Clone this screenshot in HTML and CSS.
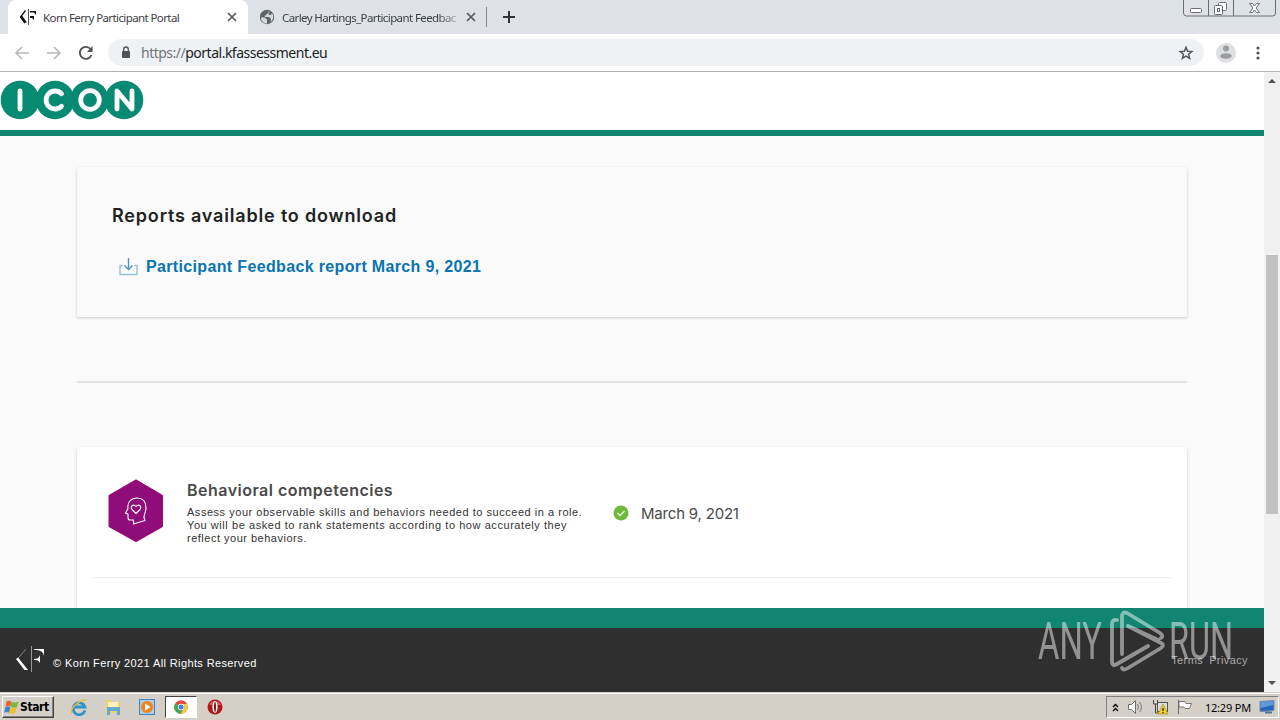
FILE: index.html
```html
<!DOCTYPE html>
<html lang="en">

<head>
	<meta charset="utf-8">
	<title>Korn Ferry Participant Portal</title>
	<link rel="stylesheet" href="styles.css">
</head>

<body>
	<div class="desktop">
		<!--Browser tabs-->
		<div class="tabs">
			<div class="tab active">
				<svg class="favicon" width="18" height="18" viewBox="0 0 18 18"><path d="M6.500 2.500L1.500 9L6 15" fill="none" stroke="#111" stroke-width="1.300"/><path d="M1 9L3 7.500L8 14.500H5z" fill="#111"/><path d="M9.500 1v16" stroke="#555"/><path d="M11 3h6v4L15 4.500h-4zM11 8h4v4l-2-2h-2z" fill="#111"/></svg>
				<span class="tab-title">Korn Ferry Participant Portal</span>
				<svg class="close" width="10" height="10" viewBox="0 0 10 10"><path d="M1 1l8 8M9 1l-8 8"/></svg>
			</div>
			<div class="tab">
				<svg class="favicon globe" width="16" height="16" viewBox="0 0 16 16"><circle cx="7" cy="8" r="7.200" fill="#5f6368"/><path d="M1 8.500h3.500l2.500 2v4C3.500 14.500 1 12 1 8.500zM7 2l2 .3-.5 2-2 .7-.5 1.500H4.500L5 8h4l2 2-.5 3c3-2 3.500-6 1.500-8.700l-1.500 2-2-.8L9.500 3z" fill="#d5d9e0"/></svg>
				<span class="tab-title faded">Carley Hartings_Participant Feedbac</span>
				<svg class="close" width="10" height="10" viewBox="0 0 10 10"><path d="M1 1l8 8M9 1l-8 8"/></svg>
			</div>
			<div class="separator"></div>
			<svg class="new-tab" width="14" height="14" viewBox="0 0 14 14"><path d="M7 1v12M1 7h12" stroke="#303238" stroke-width="2"/></svg>
			<div class="window-buttons">
				<svg width="94" height="18" viewBox="0 0 94 18" fill="none" stroke="#676d78"><path d="M.5 0v13q0 3 3 3h86q3 0 3-3V0M25.500 0v16M50.500 0v16"/><rect x="7.500" y="8.500" width="11" height="4" rx="1" fill="#fff"/><rect x="35.500" y="2.500" width="8" height="8" rx="1" fill="#fff"/><rect x="31.500" y="5.500" width="8" height="9" rx="1" fill="#fff"/><rect x="34.500" y="8.500" width="2" height="3"/><path d="M66.500 3.500h3l2 2.500 2-2.500h3l-3.500 4.500 3.500 4.500h-3l-2-2.500-2 2.500h-3L70 8z" fill="#fff"/></svg>
			</div>
		</div>

		<!--Address bar-->
		<div class="toolbar">
			<svg class="nav" width="16" height="14" viewBox="0 0 16 14"><path d="M15 7H2M8 1L2 7l6 6" fill="none" stroke="#b5b7ba" stroke-width="1.600"/></svg>
			<svg class="nav" width="16" height="14" viewBox="0 0 16 14"><path d="M1 7h13M8 1l6 6-6 6" fill="none" stroke="#b5b7ba" stroke-width="1.600"/></svg>
			<svg class="nav" width="16" height="16" viewBox="0 0 16 16"><path d="M13.500 10A6 6 0 1 1 12.500 4L14 5.500" fill="none" stroke="#505357" stroke-width="1.900"/><path d="M14.500 1v6H9z" fill="#505357"/></svg>
			<div class="address">
				<svg width="10" height="13" viewBox="0 0 10 13"><rect x="1" y="5" width="8" height="7" rx="1" fill="#505357"/><path d="M2.700 5V3.300a2.300 2.300 0 0 1 4.600 0V5" fill="none" stroke="#505357" stroke-width="1.300"/></svg>
				<span class="url"><span class="scheme">https://</span>portal.kfassessment.eu</span>
				<svg class="star" width="16" height="16" viewBox="0 0 16 16"><path d="M8 2.300l1.600 4 4.200.3-3.200 2.700 1 4.100L8 11.200l-3.600 2.200 1-4.100-3.200-2.700 4.200-.3z" fill="none" stroke="#55585c" stroke-width="1.500"/></svg>
			</div>
			<svg class="profile" width="20" height="20" viewBox="0 0 20 20"><circle cx="10" cy="10" r="10" fill="#dedfe1"/><circle cx="10" cy="5.500" r="3" fill="#9b9da0"/><ellipse cx="10" cy="13" rx="5.800" ry="2.800" fill="#9b9da0"/></svg>
			<svg class="menu" width="4" height="14" viewBox="0 0 4 14" fill="#505357"><circle cx="2" cy="2" r="1.600"/><circle cx="2" cy="7" r="1.600"/><circle cx="2" cy="12" r="1.600"/></svg>
		</div>

		<div class="viewport">
			<div class="page">
				<div class="header">
					<svg width="144" height="40" viewBox="0 0 144 40"><g fill="#078a72"><circle cx="20" cy="20" r="19.300"/><circle cx="55" cy="20" r="19.300"/><circle cx="89.500" cy="20" r="19.300"/><circle cx="124" cy="20" r="19.300"/></g><g fill="none" stroke="#fff" stroke-width="4.800" stroke-linecap="round" stroke-linejoin="round"><path d="M20 11v18M61.500 13.700a9 9 0 1 0 0 12.600M117 29V11l15 18V11"/><circle cx="90" cy="20" r="9.300"/></g></svg>
				</div>
				<div class="content">
					<div class="card reports">
						<h2>Reports available to download</h2>
						<a class="download">
							<svg width="19" height="18" viewBox="0 0 19 18" fill="none"><path d="M4 7.500H1v9h17v-9h-3" stroke="#9bc0d6" stroke-width="1.400"/><path d="M9.500 0v11.500M5.500 7.500l4 4 4-4" stroke="#4b91b8" stroke-width="1.300"/></svg>
							<span>Participant Feedback report March 9, 2021</span>
						</a>
					</div>
					<div class="divider"></div>
					<div class="card assessments">
						<div class="assessment">
							<svg class="hexagon" width="56" height="64" viewBox="0 0 56 64"><path d="M28 2L53.500 17v30L28 61.500 2 47V17z" fill="#900c78" stroke="#900c78" stroke-width="3" stroke-linejoin="round"/><g fill="none" stroke="#fff" stroke-width="1.100" stroke-linejoin="round"><path d="M25.500 45v-4h-3.500q-2 0-2-2v-4l-2.500-.8 2.500-4.700c-1-6 3-10.500 9-10.500 6.500 0 9 4.500 9 10 0 4-2 6-2 9.500l1 3z"/><path d="M28 34.500l-4-4c-2.500-3 1.500-6 4-3 2.500-3 6.500 0 4 3z"/></g></svg>
							<div class="description">
								<h3>Behavioral competencies</h3>
								<p><span class="first">Assess your observable skills and behaviors needed to succeed in a role.</span><br><span class="second">You will be asked to rank statements according to how accurately they</span><br>reflect your behaviors.</p>
							</div>
							<div class="status">
								<svg width="16" height="16" viewBox="0 0 16 16"><circle cx="8" cy="8" r="7.500" fill="#6fb93c"/><path d="M4.500 8l2.500 2.500 4.500-4.500" fill="none" stroke="#e9f8df" stroke-width="1.300"/></svg>
								<span>March 9, 2021</span>
							</div>
						</div>
					</div>
				</div>
				<div class="footer">
					<svg width="30" height="28" viewBox="0 0 30 28"><path d="M11 3L2.500 13" stroke="#999" stroke-width=".8"/><path d="M1 13l2-1.500L13 24H9.500z" fill="#fff"/><path d="M16.500 0v26" stroke="#999"/><path d="M19 3h10v7c-.5-4-3-6-10-6.300zM19 13c3 0 5-1 6-4v8c-1-2.500-3-3-6-3z" fill="#fff"/></svg>
					<span class="copyright">© Korn Ferry 2021 All Rights Reserved</span>
					<span class="legal"><a>Terms</a><a>Privacy</a></span>
				</div>
			</div>
			<div class="scrollbar">
				<svg width="8" height="4" viewBox="0 0 8 4"><path d="M0 4l4-4 4 4z" fill="#505050"/></svg>
				<div class="thumb"></div>
				<svg class="down" width="8" height="4" viewBox="0 0 8 4"><path d="M0 0l4 4 4-4z" fill="#505050"/></svg>
			</div>
		</div>

		<!--Windows taskbar-->
		<div class="taskbar">
			<div class="start">
				<svg width="17" height="16" viewBox="0 0 16 16"><path d="M3 2.500q2.500-1.500 4.800 0L6.800 7.700q-2-1.500-4.800 0z" fill="#e8602c"/><path d="M8 2.800q2.500 1.500 7 0l-1.500 5.200q-3 1.500-6.300 0z" fill="#7fb53c"/><path d="M1.800 8.200q2.500-1.500 4.900 0l-1 5.500q-2-1.500-4.900 0z" fill="#3c84c6"/><path d="M7 8.500q2.500 1.500 6.200 0l-1.500 5.500q-2.800 1.500-5.800 0z" fill="#f4bd2c"/></svg>
				<span>Start</span>
			</div>
			<div class="task"><svg width="18" height="18" viewBox="0 0 18 18"><path d="M15 12.500A6 6 0 1 1 15 9H4" fill="none" stroke="#3292d0" stroke-width="2.800"/><path d="M2 15.500C-1 10 12 0 16.500 2.500" fill="none" stroke="#e8bd3a" stroke-width="1.300"/></svg></div>
			<div class="task"><svg width="18" height="18" viewBox="0 0 18 18"><path d="M2 2h5l1 2h8v11H2z" fill="#efd36e"/><path d="M4 4h10v5H4z" fill="#fff3bd"/><path d="M3 17V9h13v8h-3v-4H6v4z" fill="#62aad2"/></svg></div>
			<div class="task"><svg width="18" height="18" viewBox="0 0 18 18"><rect x="1.500" y="1.500" width="15" height="15" fill="#a9cdea" stroke="#4484bc"/><circle cx="9" cy="9" r="6" fill="#ee851e"/><path d="M7 5.500v7l5.500-3.500z" fill="#fff"/></svg></div>
			<div class="task pressed"><svg width="14" height="14" viewBox="0 0 14 14"><circle cx="7" cy="7" r="6.700" fill="#e5483b"/><path d="M7 7L1.200 3.500A6.700 6.700 0 0 0 6.500 13.700L9.500 8.500z" fill="#3fa65a"/><path d="M7 4h6A6.700 6.700 0 0 1 6.500 13.700L9.800 8.500z" fill="#f6ca38"/><circle cx="7" cy="7" r="3.200" fill="#fff"/><circle cx="7" cy="7" r="2.500" fill="#4480d8"/></svg></div>
			<div class="task"><svg width="16" height="16" viewBox="0 0 16 16"><circle cx="8" cy="8" r="7.500" fill="#b51418"/><path d="M2 6a6.500 6.500 0 0 1 12 0z" fill="#d85a54"/><ellipse cx="8" cy="8" rx="2.600" ry="6" fill="#fff"/><ellipse cx="8" cy="8" rx="1" ry="5" fill="#8d1515"/></svg></div>
			<div class="tray">
				<svg width="7" height="9" viewBox="0 0 7 9"><path d="M1 4l2.500-2.500L6 4M1 8l2.500-2.500L6 8" fill="none" stroke="#000" stroke-width="1.400"/></svg>
				<svg width="17" height="16" viewBox="0 0 17 16"><path d="M1.500 5.500h3l4-4v13l-4-4h-3z" fill="#fff" stroke="#707070"/><path d="M10.500 5q2 3 0 6M12.500 3q4 5 0 10" fill="none" stroke="#777"/></svg>
				<svg width="17" height="16" viewBox="0 0 17 16"><rect x="5.500" y="3.500" width="10" height="9" fill="#ddd" stroke="#555"/><path d="M1.500 1v4h4V1M3.500 5v9h3" fill="none" stroke="#444"/><path d="M11 5l5 10H6z" fill="#f4d320" stroke="#9a8518" stroke-width=".6"/><path d="M11 9v3M11 13v1.200" stroke="#222" stroke-width="1.300"/></svg>
				<svg width="16" height="16" viewBox="0 0 16 16"><path d="M1.500 1v14" stroke="#666"/><path d="M2 2.500h6l1 2h5.500l-2 5H8l-1-1.500H2z" fill="#fff" stroke="#777"/></svg>
				<span class="clock">12:29 PM</span>
				<svg width="17" height="14" viewBox="0 0 17 14"><path d="M1 1.500l14-1v10l-14 1z" fill="#2466bb" stroke="#708aa8"/><path d="M1.500 2l13-1v4l-13 3z" fill="#5e9bdd"/><path d="M6 12.500h7" stroke="#507498" stroke-width="2"/></svg>
			</div>
		</div>

		<!--Recorder badge over the page-->
		<div class="watermark">
			<svg width="200" height="66" viewBox="0 0 200 66">
				<text class="mark" x="0" y="51" textLength="64" lengthAdjust="spacingAndGlyphs">ANY</text>
				<text class="mark" x="131" y="51" textLength="64" lengthAdjust="spacingAndGlyphs">RUN</text>
				<path d="M79 12q-5-1-5 4v37q0 6 5 3L110 38M84 46V9q0-6 5-4l33 20q4 3 1 5M90 18l33 17q4 2 0 5L90 60q-5 3-6 0M90 18l30 14" fill="none" stroke="#fff" stroke-width="3.800" stroke-linecap="round" stroke-linejoin="round"/>
			</svg>
		</div>
	</div>
</body>

</html>
```
FILE: styles.css
```css
body {
    margin: 0;
    font-family: "Liberation Sans", Arial, sans-serif;
    background-color: #fff;
}
svg {
    display: block;
    flex: none;
}
h2, h3, p {
    margin: 0;
}
.desktop {
    position: relative;
    width: 1280px;
    height: 720px;
    overflow: hidden;
    display: flex;
    flex-direction: column;
}

/* Browser tabs */
.tabs {
    height: 34px;
    display: flex;
    align-items: center;
    background-color: #dee1e8;
    padding-left: 8px;
    font-family: "Noto Sans", sans-serif;
    font-size: 11.5px;
    color: #3c4043;
}
.tab {
    box-sizing: border-box;
    width: 238px;
    height: 34px;
    display: flex;
    align-items: center;
    padding: 0 10px 0 12px;
}
.tab.active {
    width: 240px;
    padding: 0 11px 0 11px;
    background-color: #fff;
    border-radius: 8px 8px 0 0;
}
.tab-title {
    flex: 1;
    margin-left: 6px;
    white-space: nowrap;
    letter-spacing: -0.6px;
}
.faded {
    -webkit-mask-image: linear-gradient(to right, #000 155px, rgba(0, 0, 0, 0.25) 176px);
    mask-image: linear-gradient(to right, #000 155px, rgba(0, 0, 0, 0.25) 176px);
}
.close {
    stroke: #55585c;
    stroke-width: 1.7;
}
.separator {
    width: 1px;
    height: 20px;
    background-color: #84878e;
}
.new-tab {
    margin-left: 15px;
}
.window-buttons {
    align-self: flex-start;
    margin: 0 3px 0 auto;
}

/* Address bar */
.toolbar {
    height: 37px;
    display: flex;
    align-items: center;
    padding: 0 20px 0 14px;
    border-bottom: 1px solid #b0b1b3;
}
.nav {
    margin-right: 16px;
}
.address {
    flex: 1;
    height: 27px;
    margin-left: -2px;
    padding: 0 10px 0 13px;
    display: flex;
    align-items: center;
    background-color: #eff2f5;
    border-radius: 14px;
}
.url {
    margin-left: 10px;
    font-family: "Noto Sans", sans-serif;
    font-size: 14px;
    letter-spacing: -0.5px;
    color: #202124;
}
.scheme {
    color: #70757a;
}
.star {
    margin-left: auto;
}
.profile {
    margin: 0 20px 0 12px;
}

/* Page */
.viewport {
    height: 620px;
    display: flex;
}
.page {
    width: 1264px;
    display: flex;
    flex-direction: column;
}
.header {
    box-sizing: border-box;
    height: 64px;
    padding: 8px 0 0 0;
    border-bottom: 6px solid #128472;
}
.content {
    box-sizing: border-box;
    height: 472px;
    padding: 31px 77px 0;
    overflow: hidden;
    background-color: #fafafa;
}
.card {
    box-sizing: border-box;
    box-shadow: 0 1px 3px rgba(0, 0, 0, 0.2);
    border-radius: 2px;
}
.reports {
    height: 150px;
    padding: 37px 35px 0;
}
.reports h2 {
    font-family: Inter, sans-serif;
    font-size: 18px;
    font-weight: 600;
    line-height: 24px;
    letter-spacing: 0.82px;
    color: #222;
}
.download {
    display: flex;
    align-items: center;
    margin: 29px 0 0 7px;
    font-size: 16px;
    line-height: 20px;
    font-weight: bold;
    letter-spacing: 0.35px;
    color: #0874b2;
}
.download span {
    margin-left: 8px;
}
.divider {
    height: 2px;
    margin: 64px 0;
    background-color: #e3e3e3;
}
.assessments {
    height: 200px;
    padding: 0 16px;
    background-color: #fff;
}
.assessment {
    box-sizing: border-box;
    height: 131px;
    padding: 32px 15px 0;
    display: flex;
    align-items: flex-start;
    border-bottom: 1px solid #eee;
}
.description {
    width: 426px;
    margin-left: 23px;
    color: #444;
}
.description h3 {
    font-family: Inter, sans-serif;
    font-size: 16px;
    font-weight: 600;
    line-height: 22px;
    letter-spacing: 0.48px;
    color: #4a4a4a;
}
.description p {
    margin-top: 5px;
    font-size: 11px;
    line-height: 13px;
    letter-spacing: 0.5px;
    white-space: nowrap;
    color: #333;
}
.description .first {
    letter-spacing: 0.53px;
}
.description .second {
    letter-spacing: 0.56px;
}
.status {
    display: flex;
    align-items: center;
    margin-top: 23px;
    font-family: Inter, sans-serif;
    font-size: 15px;
    line-height: 20px;
    letter-spacing: -0.2px;
    color: #4a4a4a;
}
.status span {
    margin: 2px 0 0 12px;
}
.footer {
    box-sizing: border-box;
    height: 84px;
    display: flex;
    align-items: center;
    padding: 0 16px 0 15px;
    border-top: 20px solid #128472;
    background-color: #2f2f2f;
    font-size: 11px;
    color: #fff;
}
.copyright {
    margin: 6px 0 0 8px;
    letter-spacing: 0.38px;
}
.legal {
    display: flex;
    gap: 6px;
    margin-left: auto;
    letter-spacing: 0.4px;
    color: #aaa;
}

/* Scrollbar */
.scrollbar {
    box-sizing: border-box;
    width: 16px;
    padding: 7px 0 7px;
    display: flex;
    flex-direction: column;
    align-items: center;
    background-color: #f1f1f1;
}
.thumb {
    width: 12px;
    height: 259px;
    margin-top: 172px;
    background-color: #c1c1c1;
}
.down {
    margin-top: auto;
}

/* Taskbar */
.taskbar {
    box-sizing: border-box;
    height: 28px;
    display: flex;
    align-items: center;
    padding: 1px 0 0 2px;
    border-top: 1px solid #d4d0c8;
    box-shadow: inset 0 1px #fff;
    background-color: #d4d0c8;
}
.start {
    box-sizing: border-box;
    width: 52px;
    height: 22px;
    margin-right: 9px;
    display: flex;
    align-items: center;
    border: 1px solid;
    border-color: #fff #404040 #404040 #fff;
    box-shadow: inset -1px -1px #858585;
    font-family: "DejaVu Sans Condensed", "DejaVu Sans", sans-serif;
    font-size: 12px;
    font-weight: bold;
    letter-spacing: -0.4px;
}
.task {
    box-sizing: border-box;
    width: 32px;
    height: 22px;
    margin-right: 2px;
    display: flex;
    align-items: center;
    justify-content: center;
}
.pressed {
    background-color: #fff;
    border: 1px solid;
    border-color: #404040 #fff #fff #404040;
}
.tray {
    box-sizing: border-box;
    width: 173px;
    height: 22px;
    margin: 0 1px 0 auto;
    padding: 0 2px 0 5px;
    display: flex;
    align-items: center;
    justify-content: space-between;
    border: 1px solid;
    border-color: #808080 #fff #fff #808080;
    font-family: "Noto Sans", sans-serif;
    font-size: 11px;
}
.clock {
    margin-left: 4px;
    letter-spacing: -0.2px;
}

/* Recorder badge */
.watermark {
    position: absolute;
    left: 1038px;
    top: 608px;
    opacity: 0.48;
}
.mark {
    font-family: Roboto, sans-serif;
    font-size: 51px;
    font-weight: 400;
    fill: #fff;
}
```
